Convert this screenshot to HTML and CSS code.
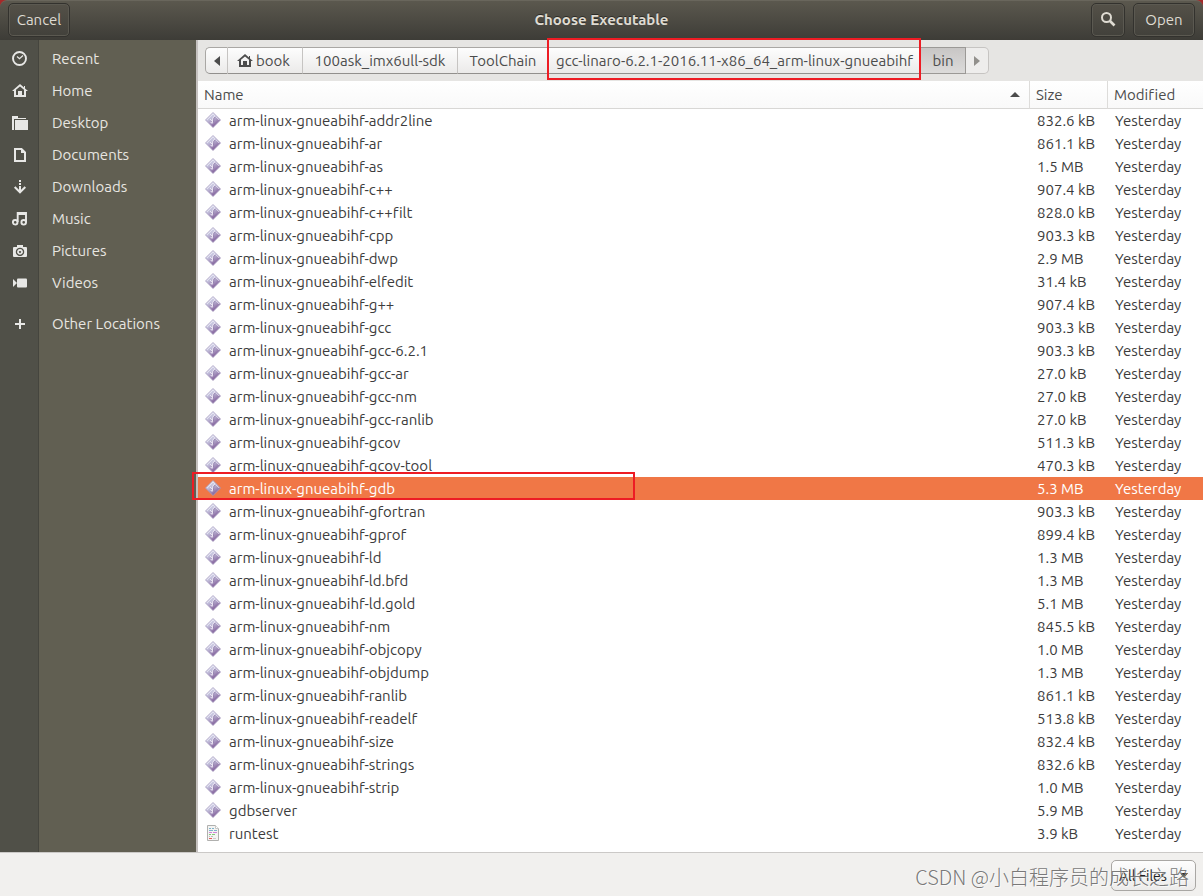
FILE: index.html
```
<!DOCTYPE html>
<html lang="en">
<head>
<meta charset="utf-8">
<title>Choose Executable</title>
<link rel="stylesheet" href="styles.css">
</head>
<body>
<svg class="defs" aria-hidden="true">
  <defs>
    <linearGradient id="gem" x1="0" y1="0" x2="0.6" y2="1">
      <stop offset="0" stop-color="#f0f5fc"/>
      <stop offset="0.45" stop-color="#c3c0dc"/>
      <stop offset="1" stop-color="#7b5593"/>
    </linearGradient>
  </defs>
  <symbol id="exec" viewBox="0 0 16 16">
    <path d="M8 .5 15.500 8 8 15.500.5 8z" fill="url(#gem)" stroke="#a79cc0" stroke-width=".8"/>
    <path d="M1.800 8 8 1.800 14.200 8" fill="none" stroke="#f6f7fc" stroke-width=".7"/>
    <path d="M9.800 4.200 8 5.500 7.200 11.300M5 7.200l2.200 1.700M5.600 10.500l1.800.6" fill="none" stroke="#f5f1fa" stroke-width=".9"/>
    <path d="M10.700 4.800 8.900 6l-.4 4" fill="none" stroke="#8a76a2" stroke-width=".6"/>
  </symbol>
  <symbol id="house" viewBox="0 0 16 16">
    <path d="M8 1 0 8h2v6h12V8h2l-3-2.600V3h-1v1.500zM8 3.400l4 3.400V12h-2V8H6v4H4V6.800z" fill="currentColor" fill-rule="evenodd"/>
  </symbol>
</svg>
<div class="dialog">
  <header class="titlebar">
    <button class="bar-btn">Cancel</button>
    <h1 class="title">Choose Executable</h1>
    <div class="actions">
      <button class="bar-btn icon-only" aria-label="Search">
        <svg width="16" height="16" viewBox="0 0 16 16" fill="none" stroke="currentColor"><circle cx="6.500" cy="5.500" r="4.500" stroke-width="2"/><path d="m10 9 4.500 4.500" stroke-width="2.600"/></svg>
      </button>
      <button class="bar-btn">Open</button>
    </div>
  </header>
  <div class="body">
    <nav class="places" aria-label="Places">
      <a class="place" href="#"><span class="glyph"><svg viewBox="0 0 16 16" fill="none" stroke="currentColor"><circle cx="7.500" cy="7.500" r="6.500" stroke-width="1.900"/><path d="m5 5.500 2.500 2.300L11 4.500" stroke-width="1.200"/></svg></span>Recent</a>
      <a class="place" href="#"><span class="glyph"><svg><use href="#house"/></svg></span>Home</a>
      <a class="place" href="#"><span class="glyph"><svg viewBox="0 0 16 16" fill="currentColor"><path d="M0 1h6v2h8v1H2v11H0zM3 5h13v10H3z"/></svg></span>Desktop</a>
      <a class="place" href="#"><span class="glyph"><svg viewBox="0 0 16 16" fill="none" stroke="currentColor" stroke-width="2"><path d="M3 2h6.500L13 5.500V14H3z"/><path d="M9 1v5h5L9 1z" fill="currentColor" stroke="none"/></svg></span>Documents</a>
      <a class="place" href="#"><span class="glyph"><svg viewBox="0 0 16 16" fill="none" stroke="currentColor" stroke-width="2"><path d="M8 1v2M8 4v2M8 7v6M2.700 8 8 13.300 13.300 8"/></svg></span>Downloads</a>
      <a class="place" href="#"><span class="glyph"><svg viewBox="0 0 16 16" fill="none" stroke="currentColor" stroke-width="1.900"><circle cx="3.200" cy="11.300" r="2.300"/><circle cx="11.700" cy="11.300" r="2.300"/><path d="M5.700 11V2H14v9.500"/><path d="M5.500 3H14" stroke-width="2"/></svg></span>Music</a>
      <a class="place" href="#"><span class="glyph"><svg viewBox="0 0 16 16" fill="currentColor"><path fill-rule="evenodd" d="M5 2h6v2h3q1 0 1 1v8q0 1-1 1H2q-1 0-1-1V5q0-1 1-1h3zM8 4.700a4.200 4.200 0 1 0 .01 0z"/><path fill-rule="evenodd" d="M8 6a2.900 2.900 0 1 0 .01 0zm0 1.900a1 1 0 1 1-.01 0z"/></svg></span>Pictures</a>
      <a class="place" href="#"><span class="glyph"><svg viewBox="0 0 16 16" fill="currentColor"><path d="M1 4l4 4-4 4z"/><rect x="5" y="3.500" width="10" height="9" rx="1"/></svg></span>Videos</a>
      <a class="place other" href="#"><span class="glyph"><svg viewBox="0 0 16 16" fill="currentColor"><path d="M7 3h2v4h4v2H9v4H7V9H3V7h4z"/></svg></span>Other Locations</a>
    </nav>
    <main class="browser">
      <div class="path">
        <button class="crumb arrow" aria-label="Scroll left"><svg width="6" height="10" viewBox="0 0 6 10"><path d="M6 0v10L0 5z" fill="currentColor"/></svg></button>
        <button class="crumb home"><svg width="16" height="16"><use href="#house"/></svg>book</button>
        <button class="crumb sdk">100ask_imx6ull-sdk</button>
        <button class="crumb tool">ToolChain</button>
        <button class="crumb gcc marked">gcc-linaro-6.2.1-2016.11-x86_64_arm-linux-gnueabihf</button>
        <button class="crumb current">bin</button>
        <button class="crumb arrow off" aria-label="Scroll right" disabled><svg width="6" height="10" viewBox="0 0 6 10"><path d="M0 0v10l6-5z" fill="currentColor"/></svg></button>
      </div>
      <table class="files">
        <thead><tr><th>
          <div class="sort">Name<svg width="10" height="5" viewBox="0 0 10 5"><path d="M0 5h10L5 0z" fill="currentColor"/></svg></div>
        </th><th class="size">Size</th><th class="date">Modified</th></tr></thead>
        <tbody id="rows"></tbody>
      </table>
    </main>
  </div>
  <footer class="footer">
    <div class="filter-box">
      <select class="filter" aria-label="File type"><option>All Files</option></select>
    </div>
    <span class="watermark">CSDN @小白程序员的成长之路</span>
  </footer>
</div>
<script src="files.js"></script>
</body>
</html>
```
FILE: styles.css
```
*, *::before, *::after { box-sizing: border-box; }
body {
  margin: 0;
  font: 15px/20px Ubuntu, "Noto Sans", "Noto Sans CJK SC", sans-serif;
  font-variant-ligatures: none;
  color: #3c3c3c;
  background: #a52a2a;
}
button { font: inherit; }
.defs { position: absolute; width: 0; height: 0; }
.dialog { display: flex; flex-direction: column; min-height: 100vh; }

.titlebar {
  display: grid;
  grid-template-columns: 1fr auto 1fr;
  align-items: center;
  height: 40px;
  padding: 0 8px 2px;
  border-top: 1px solid #69665c;
  border-radius: 7px 7px 0 0;
  background: linear-gradient(#5b584e, #3d3c37);
  color: #dfdbd2;
}
.title { margin: 0; font-size: 15px; line-height: 20px; font-weight: 700; text-shadow: 0 -1px #2c2b27; }
.actions { display: flex; justify-content: flex-end; gap: 8px; }
.bar-btn {
  justify-self: start;
  display: flex;
  align-items: center;
  justify-content: center;
  min-width: 62px;
  height: 34px;
  padding: 0 7px;
  border: 1px solid #33322e;
  border-radius: 5px;
  background: linear-gradient(#545148, #42413b);
  box-shadow: inset 0 0 0 1px #5b5951;
  color: #dfdbd2;
}
.bar-btn.icon-only { min-width: 34px; }

.body { display: flex; flex: 1; }
.places {
  flex: 0 0 196px;
  padding-top: 3px;
  background: linear-gradient(90deg, #505048 38px, #45453e 38px, #45453e 39px, #615f52 39px);
}
.place { display: flex; align-items: center; height: 32px; gap: 12px; color: #e8e6e1; text-decoration: none; }
.place.other { margin-top: 9px; }
.glyph { display: flex; justify-content: flex-end; width: 40px; padding-right: 12px; color: #e8e8e6; }
.glyph svg { width: 16px; height: 16px; }

.browser { flex: 1; min-width: 0; border-left: 2px solid #c5c1bf; background: #fff; }
.path { display: flex; height: 41px; padding: 7px; background: #e6e5e3; }
.crumb {
  display: flex;
  align-items: center;
  justify-content: center;
  gap: 3px;
  height: 27px;
  padding: 0;
  border: 1px solid #a9a7a4;
  border-bottom-color: #92908d;
  border-left: 0;
  border-right-color: #c6c4c2;
  background: linear-gradient(#fdfdfd, #ebeae9);
  color: #4c4c4c;
  white-space: nowrap;
}
.crumb.arrow { width: 23px; }
.crumb:first-child { border-left: 1px solid #a9a7a4; border-radius: 5px 0 0 5px; }
.crumb:last-child { border-radius: 0 5px 5px 0; }
.crumb.home { width: 75px; padding-right: 3px; }
.crumb.sdk { width: 155px; }
.crumb.tool { width: 91px; }
.crumb.gcc { width: 372px; }
.crumb.current { width: 45px; border-color: #9b9996; background: linear-gradient(#c8c6c5, #dcdbda); }
.crumb.off { border-color: #c6c4c2; background: #eeedec; color: #92908c; }

.marked { position: relative; }
.marked::after {
  content: "";
  position: absolute;
  inset: -10px -1px -7px -2px;
  border: 2px solid #ed1c24;
  pointer-events: none;
}

.files { width: 100%; table-layout: fixed; border-collapse: separate; border-spacing: 0; }
th {
  height: 28px;
  padding: 0 6px;
  border-bottom: 1px solid #d8d7d5;
  border-right: 1px solid #dddcda;
  background: linear-gradient(#fff, #f9f9f9);
  font-weight: 400;
  text-align: left;
  color: #4c4c4c;
}
th:last-child { border-right: 0; }
.size { width: 78px; }
.date { width: 95px; }
.sort { display: flex; align-items: center; justify-content: space-between; padding-right: 3px; }
td { height: 23px; padding: 0 7px; white-space: nowrap; }
.file { display: flex; align-items: center; gap: 8px; }
.file svg { flex: none; width: 16px; height: 16px; margin-bottom: 2px; }
.selected td { background: #f07746; color: #fff; }
.selected td:first-child { position: relative; }
.selected td:first-child::after {
  content: "";
  position: absolute;
  inset: -5px auto 0 -6px;
  width: 443px;
  border: 2px solid #ed1c24;
  pointer-events: none;
}

.footer {
  position: relative;
  display: flex;
  justify-content: flex-end;
  height: 44px;
  padding: 7px;
  border-top: 1px solid #cbc9c7;
  background: #f1f0ee;
}
.filter-box { position: relative; }
.filter-box::after {
  content: "";
  position: absolute;
  top: 13px;
  right: 8px;
  border: 4px solid transparent;
  border-top: 5px solid #222;
  border-bottom: 0;
  pointer-events: none;
}
.filter {
  appearance: none;
  width: 85px;
  height: 31px;
  padding: 0 7px;
  border: 1px solid #a9a7a4;
  border-radius: 5px;
  background: linear-gradient(#fdfdfd, #ecebea);
  font-family: inherit;
  font-size: 14px;
  color: #222;
}
.watermark {
  position: absolute;
  right: 14px;
  bottom: 5px;
  font: 300 20px/28px "Noto Sans CJK SC", sans-serif;
  color: rgba(105, 105, 105, 0.9);
  text-shadow: 1px 1px rgba(255, 255, 255, 0.6);
  white-space: nowrap;
  pointer-events: none;
}
```
FILE: files.js
```
const prefix = "arm-linux-gnueabihf-";
const files = [
  ["addr2line", "832.6 kB"], ["ar", "861.1 kB"], ["as", "1.5 MB"], ["c++", "907.4 kB"],
  ["c++filt", "828.0 kB"], ["cpp", "903.3 kB"], ["dwp", "2.9 MB"], ["elfedit", "31.4 kB"],
  ["g++", "907.4 kB"], ["gcc", "903.3 kB"], ["gcc-6.2.1", "903.3 kB"], ["gcc-ar", "27.0 kB"],
  ["gcc-nm", "27.0 kB"], ["gcc-ranlib", "27.0 kB"], ["gcov", "511.3 kB"], ["gcov-tool", "470.3 kB"],
  ["gdb", "5.3 MB"], ["gfortran", "903.3 kB"], ["gprof", "899.4 kB"], ["ld", "1.3 MB"],
  ["ld.bfd", "1.3 MB"], ["ld.gold", "5.1 MB"], ["nm", "845.5 kB"], ["objcopy", "1.0 MB"],
  ["objdump", "1.3 MB"], ["ranlib", "861.1 kB"], ["readelf", "513.8 kB"], ["size", "832.4 kB"],
  ["strings", "832.6 kB"], ["strip", "1.0 MB"]
].map(([name, size]) => [prefix + name, size]);
files.push(["gdbserver", "5.9 MB"], ["runtest", "3.9 kB"]);

const gem = '<svg><use href="#exec"/></svg>';
const script = '<svg viewBox="0 0 16 16" fill="none"><path d="M2.500.5h8l3 3v12h-11z" fill="#f4f4f3" stroke="#b0b0ae"/><path d="M10.500.5v3h3" fill="#fff" stroke="#c8c8c6"/><path d="M4 3.500h2m1 0h2M4 5.500h4m1 0h3" stroke="#7fb4cc"/><path d="M4 7.500h3m1 0h4" stroke="#cf86d8"/><path d="M4 9.500h2m1 0h3" stroke="#82cb78"/><path d="M4 11.500h1m1 0h2" stroke="#bbb"/><path d="M4 13.500h3" stroke="#e65a5a"/><path d="M8 13.500h3" stroke="#ccc"/></svg>';

document.getElementById("rows").innerHTML = files.map(([name, size]) =>
  `<tr${name === prefix + "gdb" ? ' class="selected"' : ""}><td><div class="file">${name === "runtest" ? script : gem}${name}</div></td><td>${size}</td><td>Yesterday</td></tr>`
).join("");
```
